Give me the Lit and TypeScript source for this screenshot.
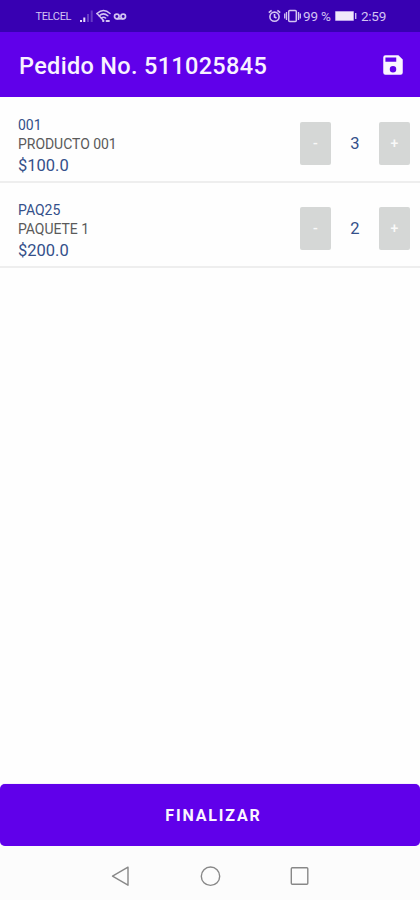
import { LitElement, html, css } from "lit";
import { customElement, property } from "lit/decorators.js";

interface Item {
  code: string;
  name: string;
  price: string;
  qty: number;
}

const items: Item[] = [
  { code: "001", name: "PRODUCTO 001", price: "$100.0", qty: 3 },
  { code: "PAQ25", name: "PAQUETE 1", price: "$200.0", qty: 2 },
];

@customElement("status-bar")
class StatusBar extends LitElement {
  static styles = css`
    :host {
      display: flex;
      align-items: center;
      height: 32px;
      box-sizing: border-box;
      padding: 0 34px 0 35.5px;
      background: #3800b2;
      color: #d3c4f2;
    }
    svg { display: block; flex: none; }
    .carrier { font-size: 11px; line-height: 14px; letter-spacing: -0.35px; width: 43.5px; padding-top: 1px; }
    .wifi { margin-left: 2px; }
    .voicemail { margin-left: 2px; }
    .gap { flex: 1; }
    .vibrate { margin-left: 3px; }
    .level { font-size: 13.5px; line-height: 16px; margin-left: 2px; width: 32px; white-space: nowrap; letter-spacing: -0.2px; }
    .time { font-size: 13.5px; line-height: 16px; margin-left: 4px; width: 25px; white-space: nowrap; letter-spacing: -0.25px; }
  `;
  render() {
    return html`
      <span class="carrier">TELCEL</span>
      <svg width="15" height="14" viewBox="0 0 15 14" fill="currentColor">
        <path d="M1 11h2v2H1zM4.300 8.500h2V13h-2z" fill="#e5daf8" />
        <path d="M8 5h2v8H8zM11.700 1.500h2V13h-2z" opacity=".3" />
      </svg>
      <svg class="wifi" width="15" height="14" viewBox="0 0 15 14" fill="none" stroke="currentColor" stroke-width="1.500" stroke-linecap="round">
        <path d="M1 4.500Q7.500-1.500 14 4.500M3.200 6.800q4.300-3.800 8.600 0M5.400 9q2.100-1.700 4.200 0" />
        <path d="M1 4.500 7.500 11.500" />
        <path d="M7 12h.5M10.500 12h2.500" stroke-width="1.800" />
      </svg>
      <svg class="voicemail" width="14" height="14" viewBox="0 0 14 14" fill="none" stroke="currentColor" stroke-width="1.700">
        <circle cx="3.800" cy="7.500" r="2.300" /><circle cx="10.200" cy="7.500" r="2.300" /><path d="M3.800 9.800h6.400" />
      </svg>
      <span class="gap"></span>
      <svg width="13" height="14" viewBox="0 0 13 14" fill="none" stroke="currentColor" stroke-width="1.600">
        <circle cx="6.500" cy="7.700" r="4.600" /><path d="M6.500 5v3l2 1M.8 3.700 3.600 1.400M12.200 3.700 9.400 1.400" />
      </svg>
      <svg class="vibrate" width="17" height="14" viewBox="0 0 17 14" fill="none" stroke="currentColor" stroke-width="1.500">
        <rect x="4.700" y="1.500" width="7.600" height="11" rx="1" /><path d="M2.500 3v8M14.500 3v8M.7 4.500v5M16.300 4.500v5" stroke-width="1.300" />
      </svg>
      <span class="level">99 %</span>
      <svg width="22" height="10" viewBox="0 0 22 10">
        <rect width="19" height="10" rx="1" fill="#b9a0e8" /><rect x="1" y="1" width="17" height="8" fill="#f0e9fb" />
        <path d="M20.700 2v6" stroke="#cdbcf0" stroke-width="1.400" />
      </svg>
      <span class="time">2:59</span>
    `;
  }
}

@customElement("order-row")
class OrderRow extends LitElement {
  @property({ attribute: false }) item!: Item;
  static styles = css`
    :host {
      display: flex;
      height: 85px;
      box-sizing: border-box;
      padding: 0 10px 0 18px;
      border-bottom: 2px solid #eeeeee;
      color: #34508a;
    }
    .info { flex: 1; padding-top: 18px; }
    .code { font-size: 14px; line-height: 19px; }
    .name { font-size: 14px; line-height: 19px; color: #5a5a5a; letter-spacing: -0.04px; }
    .price { font-size: 16.500px; line-height: 23px; }
    .stepper { display: flex; align-items: center; height: 43px; margin-top: 24px; }
    .btn {
      width: 31px;
      height: 43px;
      padding: 0;
      border: 0;
      border-radius: 2px;
      background: #d5d7d6;
      color: #f9f9f9;
      font: 500 14px/43px Roboto, sans-serif;
    }
    .qty { width: 48px; text-align: center; font-size: 16.500px; line-height: 20px; padding-top: 1px; }
  `;
  render() {
    return html`
      <div class="info">
        <div class="code">${this.item.code}</div>
        <div class="name">${this.item.name}</div>
        <div class="price">${this.item.price}</div>
      </div>
      <div class="stepper">
        <button class="btn">-</button>
        <span class="qty">${this.item.qty}</span>
        <button class="btn">+</button>
      </div>
    `;
  }
}

@customElement("app-root")
class AppRoot extends LitElement {
  static styles = css`
    :host {
      display: flex;
      flex-direction: column;
      height: 900px;
      background: #fefefe;
      font-family: Roboto, sans-serif;
    }
    .bar {
      display: flex;
      align-items: center;
      justify-content: space-between;
      height: 65px;
      box-sizing: border-box;
      padding: 1px 14.5px 0 19px;
      background: #6000ea;
      color: #f8f2ff;
    }
    .title { margin: 2px 0 0; font-size: 23.5px; line-height: 30px; font-weight: 500; letter-spacing: 0.32px; white-space: nowrap; }
    .list { flex: 1; padding-top: 1px; }
    .finish {
      height: 62px;
      border: 0;
      border-radius: 5px;
      padding: 2px 0 0 7px;
      background: #6000ea;
      color: #faf5ff;
      font: 700 16px/60px Roboto, sans-serif;
      letter-spacing: 1.85px;
      box-shadow: 0 0 1px #a77bf0;
    }
    .nav {
      display: flex;
      justify-content: center;
      align-items: center;
      gap: 65.5px;
      height: 54px;
      background: #fcfcfc;
    }
    .nav svg { display: block; margin-top: 6px; }
  `;
  render() {
    return html`
      <status-bar></status-bar>
      <header class="bar">
        <h1 class="title">Pedido No. 511025845</h1>
        <svg width="26" height="26" viewBox="0 0 24 24" fill="#faf5ff">
          <path d="M17 3H5a2 2 0 0 0-2 2v14a2 2 0 0 0 2 2h14a2 2 0 0 0 2-2V7l-4-4zm-5 16a3 3 0 1 1 0-6 3 3 0 0 1 0 6zm3-10H5V5h10v4z" />
        </svg>
      </header>
      <main class="list">${items.map((i) => html`<order-row .item=${i}></order-row>`)}</main>
      <button class="finish">FINALIZAR</button>
      <nav class="nav">
        <svg width="24" height="24" viewBox="0 0 24 24" fill="none" stroke="#888" stroke-width="1.400" stroke-linejoin="round"><path d="M19 3.200v18L3.500 12.200z" /></svg>
        <svg width="24" height="24" viewBox="0 0 24 24" fill="none" stroke="#888" stroke-width="1.400"><circle cx="12.500" cy="12.200" r="9.200" /></svg>
        <svg width="24" height="24" viewBox="0 0 24 24" fill="none" stroke="#888" stroke-width="1.400"><rect x="3.300" y="3.700" width="16.500" height="16.500" rx="1" /></svg>
      </nav>
    `;
  }
}
